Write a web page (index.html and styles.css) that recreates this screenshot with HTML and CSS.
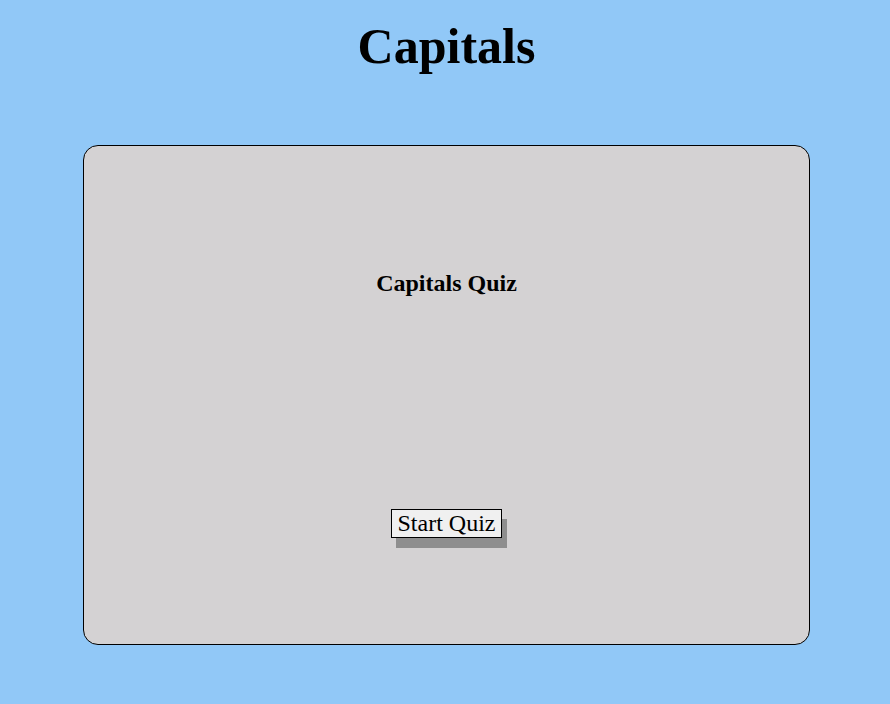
FILE: index.html
```html
<!DOCTYPE html>
<html>
<head>
<meta charset="utf-8">
<title>Capitals</title>
<link rel="stylesheet" href="styles.css">
</head>
<body>
<h1 class="title">Capitals</h1>
<main class="card">
  <h2 class="quiz-title">Capitals Quiz</h2>
  <button class="start-btn">Start Quiz</button>
</main>
</body>
</html>
```
FILE: styles.css
```css
html, body {
  margin: 0;
  background: #91c8f7;
}
body {
  padding: 18px 80px 0 83px;
  font-family: "Liberation Serif", "Times New Roman", serif;
  color: #000;
}
.title {
  margin: 0 0 69px 0;
  font-size: 50px;
  font-weight: bold;
  line-height: 57.5px;
  text-align: center;
}
.card {
  box-sizing: border-box;
  height: 500px;
  border: 1px solid #000;
  border-radius: 15px;
  background: #d4d2d3;
  padding-top: 123px;
  display: flex;
  flex-direction: column;
  align-items: center;
}
.quiz-title {
  margin: 0;
  font-size: 24px;
  font-weight: bold;
  line-height: 28px;
}
.start-btn {
  margin-top: 212px;
  font-family: "Liberation Serif", "Times New Roman", serif;
  font-size: 24px;
  line-height: 26px;
  padding: 0 6px 1px;
  border: 1px solid #000;
  background: #f0f0f0;
  color: #000;
  box-shadow: 5px 10px 0 #8e8e8e;
}
```
